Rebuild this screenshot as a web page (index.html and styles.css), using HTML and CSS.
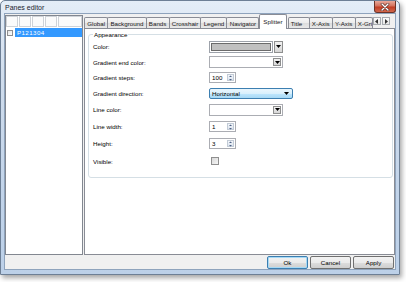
FILE: index.html
```html
<html lang="en">
<head>
    <meta charset="UTF-8">
    <title>Panes editor</title>
    <link rel="stylesheet" href="styles.css">
</head>
<body>
    <div class="window">
        <div class="titlebar">
            <span class="title">Panes editor</span>
            <span class="close">
                <svg width="10" height="8" viewBox="0 0 10 8">
                    <path d="M2 1 L8 7 M8 1 L2 7" stroke="#5a2a20" stroke-width="2.6" stroke-linecap="round"/>
                    <path d="M2 1 L8 7 M8 1 L2 7" stroke="#ffffff" stroke-width="1.4" stroke-linecap="round"/>
                </svg>
            </span>
        </div>

        <div class="client">
            <div class="main">
                <div class="panes">
                    <div class="grid-head">
                        <span class="cell"></span>
                        <span class="cell"></span>
                        <span class="cell"></span>
                        <span class="cell"></span>
                        <span class="cell rest"></span>
                    </div>
                    <div class="pane-row">
                        <span class="check"></span>
                        <span class="pane-name">P121304</span>
                    </div>
                </div>

                <div class="tabs">
                    <div class="tab-strip">
                        <span class="tab">Global</span>
                        <span class="tab">Background</span>
                        <span class="tab">Bands</span>
                        <span class="tab">Crosshair</span>
                        <span class="tab">Legend</span>
                        <span class="tab">Navigator</span>
                        <span class="tab active">Splitter</span>
                        <span class="tab short">Title</span>
                        <span class="tab">X-Axis</span>
                        <span class="tab">Y-Axis</span>
                        <span class="tab clipped">X-Gri</span>
                        <span class="scroller">
                            <span class="arrow">
                                <svg width="4" height="5" viewBox="0 0 4 5"><polygon points="3,0 3,5 0,2.5" fill="#333"/></svg>
                            </span>
                            <span class="arrow">
                                <svg width="4" height="5" viewBox="0 0 4 5"><polygon points="1,0 1,5 4,2.5" fill="#333"/></svg>
                            </span>
                        </span>
                    </div>

                    <div class="tab-page">
                        <fieldset class="group">
                            <legend>Appearance</legend>
                            <div class="form">
                                <span class="label">Color:</span>
                                <span class="combo swatch-combo">
                                    <span class="swatch"></span>
                                    <span class="drop"><svg width="5" height="3" viewBox="0 0 5 3"><polygon points="0,0 5,0 2.5,3" fill="#000"/></svg></span>
                                </span>

                                <span class="label">Gradient end color:</span>
                                <span class="combo">
                                    <span class="value"></span>
                                    <span class="drop"><svg width="5" height="3" viewBox="0 0 5 3"><polygon points="0,0 5,0 2.5,3" fill="#000"/></svg></span>
                                </span>

                                <span class="label">Gradient steps:</span>
                                <span class="spin">
                                    <span class="value">100</span>
                                    <span class="spin-btn">
                                        <svg width="5" height="8" viewBox="0 0 5 8"><polygon points="1,3 4,3 2.5,1.5" fill="#4d6185"/><polygon points="1,5 4,5 2.5,6.5" fill="#4d6185"/></svg>
                                    </span>
                                </span>

                                <span class="label">Gradient direction:</span>
                                <span class="select">
                                    <span class="value">Horizontal</span>
                                    <svg width="5" height="3" viewBox="0 0 5 3"><polygon points="0,0 5,0 2.5,3" fill="#000"/></svg>
                                </span>

                                <span class="label">Line color:</span>
                                <span class="combo">
                                    <span class="value"></span>
                                    <span class="drop"><svg width="5" height="3" viewBox="0 0 5 3"><polygon points="0,0 5,0 2.5,3" fill="#000"/></svg></span>
                                </span>

                                <span class="label">Line width:</span>
                                <span class="spin">
                                    <span class="value">1</span>
                                    <span class="spin-btn">
                                        <svg width="5" height="8" viewBox="0 0 5 8"><polygon points="1,3 4,3 2.5,1.5" fill="#4d6185"/><polygon points="1,5 4,5 2.5,6.5" fill="#4d6185"/></svg>
                                    </span>
                                </span>

                                <span class="label">Height:</span>
                                <span class="spin">
                                    <span class="value">3</span>
                                    <span class="spin-btn">
                                        <svg width="5" height="8" viewBox="0 0 5 8"><polygon points="1,3 4,3 2.5,1.5" fill="#4d6185"/><polygon points="1,5 4,5 2.5,6.5" fill="#4d6185"/></svg>
                                    </span>
                                </span>

                                <span class="label">Visible:</span>
                                <span class="checkbox"></span>
                            </div>
                        </fieldset>
                    </div>
                </div>
            </div>

            <div class="button-bar">
                <button class="default">Ok</button>
                <button>Cancel</button>
                <button>Apply</button>
            </div>
        </div>
    </div>
</body>
</html>
```

FILE: styles.css
```css
html, body {
    margin: 0;
    padding: 0;
    background: #ffffff;
    font-family: "Liberation Sans", Arial, sans-serif;
    font-size: 6.2px;
    color: #000000;
}

.window {
    width: 400px;
    height: 275px;
    box-sizing: border-box;
    border: 1px solid #6d7f95;
    border-radius: 5px 5px 0 0;
    background: linear-gradient(#e4edf7, #cfdcec 30%, #c2d4ea 70%, #bcd0e8);
    box-shadow: 2px 3px 5px rgba(0, 0, 0, 0.35);
    display: flex;
    flex-direction: column;
    padding: 0 3px 4px 3px;
}

.titlebar {
    height: 12px;
    display: flex;
    justify-content: space-between;
    align-items: flex-start;
}

.title {
    font-size: 7px;
    color: #1b2330;
    margin-top: 3px;
    padding-left: 1px;
}

.close {
    width: 22px;
    height: 12px;
    box-sizing: border-box;
    border: 1px solid #6b3328;
    border-top: none;
    border-radius: 0 0 3px 3px;
    background: linear-gradient(#e9a99a, #d4725d 45%, #c13d24 55%, #d1674c);
    display: flex;
    align-items: center;
    justify-content: center;
}

.client {
    flex: 1;
    background: #f0f0f0;
    border: 1px solid #8ea3bc;
    display: flex;
    flex-direction: column;
    min-height: 0;
}

.main {
    flex: 1;
    display: flex;
    min-height: 0;
}

.panes {
    width: 78px;
    box-sizing: border-box;
    margin-top: 1px;
    background: #ffffff;
    border: 1px solid #828790;
}

.grid-head {
    display: flex;
    gap: 1px;
}

.cell {
    width: 12px;
    height: 11px;
    box-sizing: border-box;
    border: 1px solid #cfd3d8;
    background: #fbfbfb;
}

.cell.rest {
    flex: 1;
}

.pane-row {
    display: flex;
    align-items: center;
    height: 9px;
    margin-top: 1px;
}

.check {
    width: 6px;
    height: 6px;
    box-sizing: border-box;
    margin: 0 2px 0 1px;
    border: 1px solid #8f8f8f;
    background: linear-gradient(135deg, #e3e3e3, #ffffff);
}

.pane-name {
    flex: 1;
    height: 9px;
    line-height: 9px;
    padding-left: 2px;
    background: #3399ff;
    color: #ffffff;
    letter-spacing: 0.4px;
}

.tabs {
    flex: 1;
    display: flex;
    flex-direction: column;
    margin-left: 1px;
    min-width: 0;
}

.tab-strip {
    display: flex;
    align-items: flex-end;
    height: 14px;
    position: relative;
    z-index: 1;
}

.tab {
    height: 11px;
    line-height: 11px;
    box-sizing: border-box;
    padding: 0 2.2px;
    margin-right: -1px;
    border: 1px solid #898c95;
    border-bottom: none;
    border-radius: 2px 2px 0 0;
    background: linear-gradient(#f6f6f6, #ebebeb 50%, #dcdcdc 51%, #e8e8e8);
    color: #1a1a1a;
    white-space: nowrap;
}

.tab.active {
    height: 15px;
    line-height: 13px;
    margin-bottom: -1px;
    padding: 0 3px;
    margin-left: 1px;
    margin-right: 1px;
    background: #ffffff;
}

.tab.short {
    min-width: 22px;
}

.tab.clipped {
    width: 18px;
    overflow: hidden;
    padding-right: 0;
}

.scroller {
    display: flex;
    height: 11px;
    align-items: flex-start;
    padding-left: 1px;
}

.arrow {
    width: 8px;
    height: 8px;
    box-sizing: border-box;
    border: 1px solid #a7abb0;
    background: linear-gradient(#fbfbfb, #e6e6e6);
    display: flex;
    align-items: center;
    justify-content: center;
    margin-right: 1px;
}

.tab-page {
    flex: 1;
    background: #ffffff;
    border: 1px solid #898c95;
    padding: 0 1px 0 3px;
}

.group {
    margin: 2px 0 0 0;
    padding: 1px 4px 7px 4px;
    border: 1px solid #d5dfe5;
    border-radius: 3px;
}

.group legend {
    padding: 0 1px;
    line-height: 7px;
}

.form {
    display: grid;
    grid-template-columns: 116px 1fr;
    grid-template-rows: 15px 16px 15px 16px 17px 17px 17px 18px;
    align-items: center;
}

.combo {
    width: 74px;
    height: 12px;
    box-sizing: border-box;
    border: 1px solid #abadb3;
    background: #ffffff;
    display: flex;
    justify-content: flex-end;
    align-items: stretch;
    padding: 1px;
}

.combo .value {
    flex: 1;
}

.drop {
    width: 8px;
    box-sizing: border-box;
    border: 1px solid #8e8f8f;
    background: linear-gradient(#f2f2f2, #e4e4e4 50%, #d6d6d6);
    display: flex;
    align-items: center;
    justify-content: center;
}

.swatch-combo {
    border: none;
    padding: 0;
    gap: 1px;
}

.swatch {
    flex: 1;
    border: 1px solid #9da2aa;
    padding: 1px;
    background: #ffffff;
}

.swatch::after {
    content: "";
    display: block;
    height: 100%;
    box-sizing: border-box;
    border: 1px solid #6b6b6b;
    background: #c0c0c0;
}

.swatch-combo .drop {
    width: 9px;
}

.spin {
    width: 27px;
    height: 11px;
    box-sizing: border-box;
    border: 1px solid #abadb3;
    background: #ffffff;
    display: flex;
    align-items: stretch;
    padding: 0 1px;
}

.spin .value {
    flex: 1;
    line-height: 9px;
    padding-left: 1px;
}

.spin-btn {
    width: 7px;
    margin: 1px 0;
    box-sizing: border-box;
    border: 1px solid #c2cbd6;
    background: linear-gradient(#f3f6fa, #dde5ef);
    display: flex;
    align-items: center;
    justify-content: center;
}

.select {
    width: 84px;
    height: 11px;
    box-sizing: border-box;
    border: 1px solid #3c7fb1;
    border-radius: 2px;
    background: linear-gradient(#eaf6fd, #d9f0fc 50%, #bee6fd 51%, #a7d9f5);
    display: flex;
    align-items: center;
    justify-content: space-between;
    padding: 0 3px 0 2px;
}

.checkbox {
    width: 8px;
    height: 8px;
    box-sizing: border-box;
    margin-left: 2px;
    border: 1px solid #8f8f8f;
    background: linear-gradient(135deg, #d8d8d8, #f6f6f6);
}

.button-bar {
    height: 14px;
    display: flex;
    justify-content: flex-end;
    align-items: flex-end;
    gap: 2px;
    padding-right: 1px;
}

button {
    width: 41px;
    height: 13px;
    box-sizing: border-box;
    padding: 0;
    font-family: "Liberation Sans", Arial, sans-serif;
    font-size: 6.2px;
    color: #000000;
    border: 1px solid #707070;
    border-radius: 2px;
    background: linear-gradient(#f2f2f2, #ebebeb 50%, #dddddd 51%, #cfcfcf);
}

button.default {
    border-color: #3c7fb1;
    box-shadow: inset 0 0 0 1px #a7d9f5;
}
```
